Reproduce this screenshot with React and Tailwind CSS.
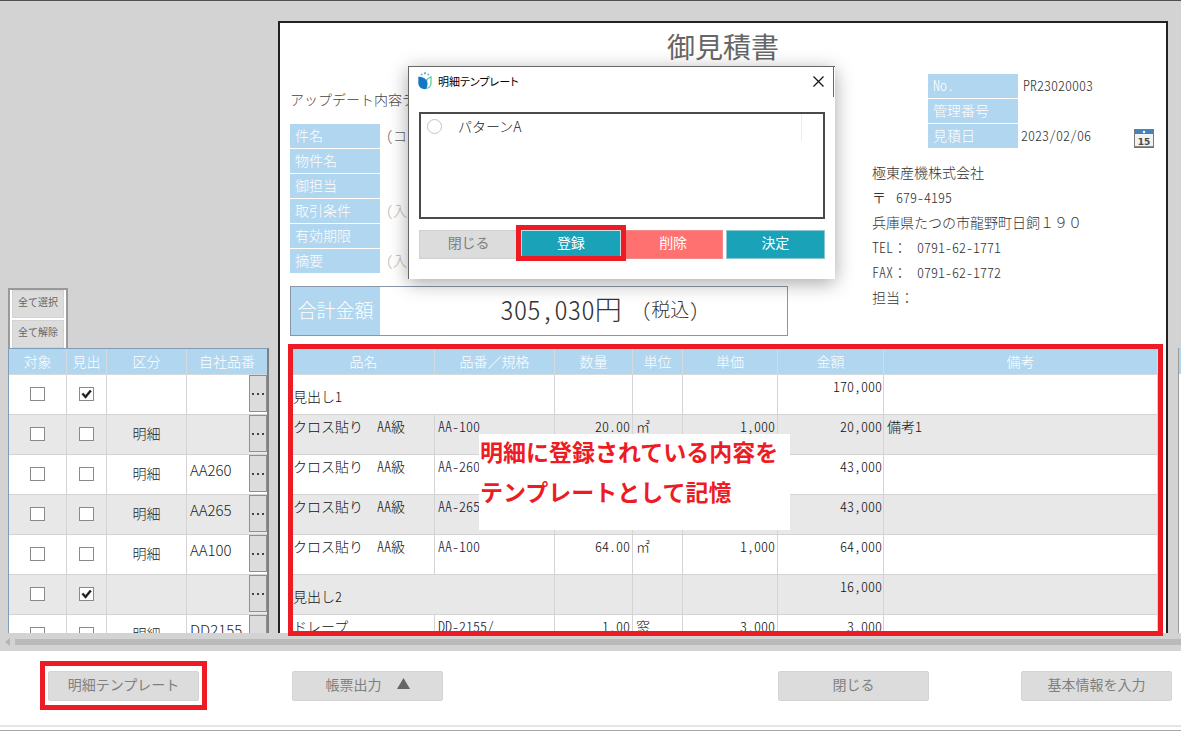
import React from "react";

const items = [
  { heading: true, name: "見出し1", amount: "170,000" },
  { name: "クロス貼り　AA級", spec: "AA-100", qty: "20.00", unit: "㎡", price: "1,000", amount: "20,000", note: "備考1", code: "" },
  { name: "クロス貼り　AA級", spec: "AA-260", amount: "43,000", code: "AA260" },
  { name: "クロス貼り　AA級", spec: "AA-265", amount: "43,000", code: "AA265" },
  { name: "クロス貼り　AA級", spec: "AA-100", qty: "64.00", unit: "㎡", price: "1,000", amount: "64,000", code: "AA100" },
  { heading: true, name: "見出し2", amount: "16,000" },
  { name: "ドレープ", spec: "DD-2155/", qty: "1.00", unit: "窓", price: "3,000", amount: "3,000", code: "DD2155" },
];

const fields = [
  ["件名", "(コピ", "text-[#666]"],
  ["物件名", "", ""],
  ["御担当", "", ""],
  ["取引条件", "(入力", "text-[#b4b4b4]"],
  ["有効期限", "", ""],
  ["摘要", "(入力", "text-[#b4b4b4]"],
];

const company = [
  ["極東産機株式会社"],
  ["〒", "679-4195"],
  ["兵庫県たつの市龍野町日飼１９０"],
  ["TEL：", "0791-62-1771"],
  ["FAX：", "0791-62-1772"],
  ["担当："],
];

// Latin letters and digits take half the width of a kanji; full-width signs keep theirs.
function T({ children }) {
  const parts = (children || "").split(/([\x20-\x7e]+)/);
  return parts.map((p, i) =>
    i % 2 ? <span key={i} className="[font-feature-settings:'hwid']">{p}</span> : p
  );
}

function Check({ label, checked = false }) {
  return (
    <label className="relative mx-auto block h-[14px] w-[15px]">
      <input
        type="checkbox"
        defaultChecked={checked}
        aria-label={label}
        className="peer block h-[14px] w-[15px] appearance-none border border-[#8a8a8a] bg-white"
      />
      <svg viewBox="0 0 15 14" className="pointer-events-none absolute inset-0 hidden h-[14px] w-[15px] peer-checked:block">
        <path d="M2.800 7.200l1.600-1.200 2 2.400 4.600-5.400 1.400 1.200-5.800 7.200z" fill="#1c1c1c" stroke="#1c1c1c" strokeWidth="0.500" />
      </svg>
    </label>
  );
}

function AppIcon() {
  return (
    <svg viewBox="0 0 14 18" className="h-[18px] w-[14px]" aria-hidden="true">
      <circle cx="3.6" cy="2.4" r="1" fill="#6db3dc" />
      <circle cx="7" cy="1.2" r="1" fill="#3f97d0" />
      <circle cx="10.4" cy="2.4" r="1" fill="#6db3dc" />
      <path d="M13 4.800V11c0 3.200-2 5.200-5.400 5.400L8.800 7.600z" fill="#fff" stroke="#56c3a0" strokeWidth="1.200" />
      <path d="M.3 4.600C4 4.800 8 6.400 9.200 9.800c.8 2.400.3 5.200-1.600 7.400C3 17.200.3 14.600.3 11z" fill="#1478c8" />
    </svg>
  );
}

function CalendarIcon() {
  return (
    <svg viewBox="0 0 20 19" className="h-[19px] w-[20px]" aria-hidden="true">
      <rect x="0.500" y="0.500" width="19" height="18" fill="#f2f2f2" stroke="#7a7a7a" />
      <rect x="1" y="1" width="18" height="4" fill="#4383ba" />
      <circle cx="10" cy="3" r="1.200" fill="#fff" />
      <path d="M1 18h18" stroke="#6a6a6a" strokeWidth="1.500" />
      <text x="10" y="16" textAnchor="middle" fontSize="9" fontWeight="bold" fontFamily="DejaVu Sans, sans-serif" fill="#4a4a4a">15</text>
    </svg>
  );
}

function SideTable() {
  const th = "h-[26px] border-r border-b border-[#d4dade] p-0 font-light last:border-r-0";
  const td = "border-r border-b border-[#d4d4d4] p-0 pb-[2px] last:border-r-0";
  return (
    <table className="w-full table-fixed border-separate border-spacing-0 border-t border-r-2 border-l border-t-[#7f9db9] border-r-[#808080] border-l-[#7f9db9] text-[14px]">
      <colgroup>
        <col className="w-[58px]" />
        <col className="w-[40px]" />
        <col className="w-[80px]" />
        <col />
      </colgroup>
      <thead className="bg-[#b1d6ef] text-white">
        <tr>
          <th className={th}>対象</th>
          <th className={th}>見出</th>
          <th className={th}>区分</th>
          <th className={th}>自社品番</th>
        </tr>
      </thead>
      <tbody>
        {items.map((r, i) => (
          <tr key={i} className="h-[40px] bg-white even:bg-[#e8e8e8]">
            <td className={td}><Check label="対象" /></td>
            <td className={td}><Check label="見出" checked={!!r.heading} /></td>
            <td className={td + " text-center font-light text-[#222]"}>{r.heading ? "" : "明細"}</td>
            <td className={td}>
              <div className="flex h-[37px] justify-between pl-[3px] text-[15px] leading-[30px] font-light text-[#222]">
                <span>{r.code}</span>
                <button aria-label="品番選択" className="flex h-[37px] w-[18px] items-center justify-center gap-[3px] border border-[#8f8f8f] bg-[#dcdcdc]">
                  <i className="size-[2px] bg-[#444]" />
                  <i className="size-[2px] bg-[#444]" />
                  <i className="size-[2px] bg-[#444]" />
                </button>
              </div>
            </td>
          </tr>
        ))}
      </tbody>
    </table>
  );
}

function DetailTable() {
  const th = "h-[26px] border-r border-b border-[#d4dade] p-0 font-light";
  const td = "h-[40px] border-r border-b border-[#d4d4d4] p-0 align-top leading-[22px]";
  return (
    <table className="w-full table-fixed border-separate border-spacing-0 text-[14px] font-light text-[#111]">
      <colgroup>
        <col className="w-[142px]" />
        <col className="w-[120px]" />
        <col className="w-[78px]" />
        <col className="w-[50px]" />
        <col className="w-[95px]" />
        <col className="w-[106px]" />
        <col />
      </colgroup>
      <thead className="bg-[#b1d6ef] text-white">
        <tr>
          {["品名", "品番／規格", "数量", "単位", "単価", "金額", "備考"].map((h) => (
            <th key={h} className={th}>{h}</th>
          ))}
        </tr>
      </thead>
      <tbody>
        {items.map((r, i) => (
          <tr key={i} className="bg-white even:bg-[#e8e8e8]">
            {r.heading ? (
              <td colSpan={2} className={td}><div className="pt-[10px]"><T>{r.name}</T></div></td>
            ) : (
              <>
                <td className={td}><T>{r.name}</T></td>
                <td className={td}><div className="pl-[3px] text-[#113]"><T>{r.spec}</T></div></td>
              </>
            )}
            <td className={td + " text-right"}><div className="pr-[2px]"><T>{r.qty}</T></div></td>
            <td className={td}><div className="pl-[3px]">{r.unit}</div></td>
            <td className={td + " text-right"}><div className="pr-[2px]"><T>{r.price}</T></div></td>
            <td className={td + " text-right"}><div className="pr-px"><T>{r.amount}</T></div></td>
            <td className={td}><div className="pl-[3px]"><T>{r.note}</T></div></td>
          </tr>
        ))}
      </tbody>
    </table>
  );
}

function Paper() {
  const label = "h-[24px] w-[90px] bg-[#b1d6ef] pl-[5px] leading-[22px] font-light text-white";
  return (
    <main className="mt-[20px] ml-[9px] flex min-w-0 flex-1 flex-col border-x-2 border-t-2 border-[#222] bg-white text-[14px]">
      <h1 className="h-[50px] text-center text-[28px] leading-[46px] text-[#666]">御見積書</h1>
      <div className="flex justify-between pl-[10px]">
        <div className="w-[498px]">
          <p className="mt-[15px] h-[24px] leading-[22px] font-light text-[#444]">アップデート内容テ</p>
          <dl className="mt-[12px] flex flex-col gap-px">
            {fields.map(([k, v, tone]) => (
              <div key={k} className="flex">
                <dt className={label}>{k}</dt>
                <dd className={"pl-[6px] leading-[22px] font-light " + tone}><T>{v}</T></dd>
              </div>
            ))}
          </dl>
          <div className="mt-[13px] flex h-[50px] items-stretch border border-[#8797a6]">
            <div className="flex w-[89px] items-center justify-center bg-[#b1d6ef] pb-[2px] text-[19px] font-light text-white">合計金額</div>
            <div className="flex flex-1 items-center justify-center gap-[20px] pb-[4px] pl-[32px] font-light text-[#333]">
              <span className="text-[27px]"><T>305,030円</T></span>
              <span className="text-[19px]"><T>(税込)</T></span>
            </div>
          </div>
        </div>
        <div className="w-[294px] pt-px font-light text-[#333]">
          <dl className="ml-[56px] flex flex-col gap-px">
            <div className="flex">
              <dt className={label}><T>No.</T></dt>
              <dd className="pl-[5px] leading-[22px]"><T>PR23020003</T></dd>
            </div>
            <div className="flex">
              <dt className={label}>管理番号</dt>
              <dd />
            </div>
            <div className="flex">
              <dt className={label}>見積日</dt>
              <dd className="flex h-[24px] flex-1 justify-between pr-[12px] pl-[3px] leading-[22px]">
                <span><T>2023/02/06</T></span>
                <button aria-label="日付を選択" className="pt-[4px]"><CalendarIcon /></button>
              </dd>
            </div>
          </dl>
          <address className="mt-[12px] leading-[25px] not-italic">
            {company.map(([a, b]) => (
              <p key={a} className="flex gap-[10px]">
                <span><T>{a}</T></span>
                {b && <span><T>{b}</T></span>}
              </p>
            ))}
          </address>
        </div>
      </div>
      <div className="relative z-10 mt-auto mr-[3px] -mb-[3px] ml-[8px] flex min-h-0 flex-1 flex-col pt-[8px]">
        <div className="relative min-h-0 flex-1 border-5 border-[#ed1c24]">
          <div className="h-full overflow-hidden">
            <DetailTable />
          </div>
          <div className="absolute top-[85px] left-[186px] flex h-[96px] w-[311px] flex-col gap-[6px] bg-white pl-px text-[23px] leading-[34px] font-bold whitespace-nowrap text-[#ed1c24]">
            <p>明細に登録されている内容を</p>
            <p>テンプレートとして記憶</p>
          </div>
        </div>
      </div>
    </main>
  );
}

function TemplateDialog() {
  const btn = "block h-[29px] w-full border pb-[5px] text-[14px] leading-[22px]";
  return (
    <section
      role="dialog"
      aria-label="明細テンプレート"
      className="absolute top-[65px] left-[408px] z-20 w-[427px] border-t border-l border-[#666] bg-white pb-[20px] shadow-[0_4px_18px_rgba(0,0,0,0.35)]"
    >
      <header className="mr-px flex h-[30px] items-center border-r border-[#666] px-[9px] pb-[2px]">
        <AppIcon />
        <h2 className="ml-[6px] text-[11px] text-black [font-feature-settings:'palt']">明細テンプレート</h2>
        <button aria-label="閉じる" className="ml-auto">
          <svg viewBox="0 0 11 11" className="size-[11px]">
            <path d="M.5.5l10 10M10.500.5l-10 10" stroke="#111" strokeWidth="1.200" />
          </svg>
        </button>
      </header>
      <div className="px-[10px] pt-[15px]">
        <div className="h-[107px] border-2 border-[#4a4a4a]">
          <label className="mr-[21px] flex h-[27px] items-center border-r border-[#ececec] pb-[2px] pl-[6px] text-[14px] font-light text-[#222]">
            <input type="radio" name="template" className="size-[15px] appearance-none rounded-full border border-[#c4c4c4] bg-white" />
            <span className="ml-[16px]">パターンA</span>
          </label>
        </div>
        <div className="mt-[11px] grid grid-cols-4 gap-[3px]">
          <button className={btn + " border-[#d0d0d0] bg-[#dcdcdc] text-[#808080]"}>閉じる</button>
          <div className="relative">
            <button className={btn + " border-[#c9dfe3] bg-[#19a2b8] text-white"}>登録</button>
            <div className="pointer-events-none absolute -inset-x-[5px] -top-[5px] -bottom-[2px] border-5 border-[#ed1c24]" />
          </div>
          <button className={btn + " border-[#f08a8a] bg-[#ff7070] text-white"}>削除</button>
          <button className={btn + " border-[#8fc7d0] bg-[#19a2b8] text-white"}>決定</button>
        </div>
      </div>
    </section>
  );
}

export default function App() {
  const small = "h-[28px] border border-[#d2d2d2] bg-[#dcdcdc] pb-[4px] text-[10px] leading-[20px] text-[#666]";
  const foot = "h-[30px] w-[151px] rounded-[2px] border border-[#d4d4d4] bg-[#dcdcdc] pb-[5px] text-[14px] leading-[22px] text-[#808080]";
  return (
    <div className="relative flex h-screen flex-col overflow-hidden border-t border-[#505050] bg-[#d3d3d3] font-['Noto_Sans_CJK_JP',sans-serif]">
      <div className="flex min-h-0 flex-1">
        <aside className="ml-[8px] flex w-[261px] flex-none flex-col pt-[287px]">
          <div className="flex h-[60px] w-[60px] flex-none flex-col gap-[2px] border-x-2 border-t-2 border-[#9a9a9a] bg-white px-[2px]">
            <button className={small}>全て選択</button>
            <button className={small}>全て解除</button>
          </div>
          <div className="min-h-0 flex-1 overflow-hidden">
            <SideTable />
          </div>
        </aside>
        <Paper />
        <div className="mt-[347px] ml-[10px] w-[3px] flex-none border-l border-[#9a9a9a] bg-white">
          <div className="h-[26px] bg-[#b1d6ef]" />
        </div>
      </div>
      <div className="flex h-[18px] flex-none items-center pl-[5px]">
        <svg viewBox="0 0 5 8" className="h-[8px] w-[5px]"><path d="M5 0v8L0 4z" fill="#b4b4b4" /></svg>
        <div className="ml-[5px] h-[6px] flex-1 bg-[#bababa]" />
      </div>
      <footer className="flex h-[80px] flex-none flex-col bg-white">
        <div className="flex h-[74px] items-start pr-[9px] pl-[40px]">
          <div className="mt-[10px] h-[49px] border-5 border-[#ed1c24] px-[3px] pt-[5px]">
            <button className={foot + " block"}>明細テンプレート</button>
          </div>
          <button className={foot + " mt-[20px] ml-[85px] flex items-center justify-center gap-[15px]"}>
            帳票出力
            <svg viewBox="0 0 13 11" className="h-[11px] w-[13px]"><path d="M6.500 0L13 11H0z" fill="#666" /></svg>
          </button>
          <button className={foot + " mt-[20px] ml-auto"}>閉じる</button>
          <button className={foot + " mt-[20px] ml-[92px]"}>基本情報を入力</button>
        </div>
        <div className="h-[6px] border-t-2 border-b border-t-[#e5e5e5] border-b-[#a8a8a8]" />
      </footer>
      <TemplateDialog />
    </div>
  );
}
